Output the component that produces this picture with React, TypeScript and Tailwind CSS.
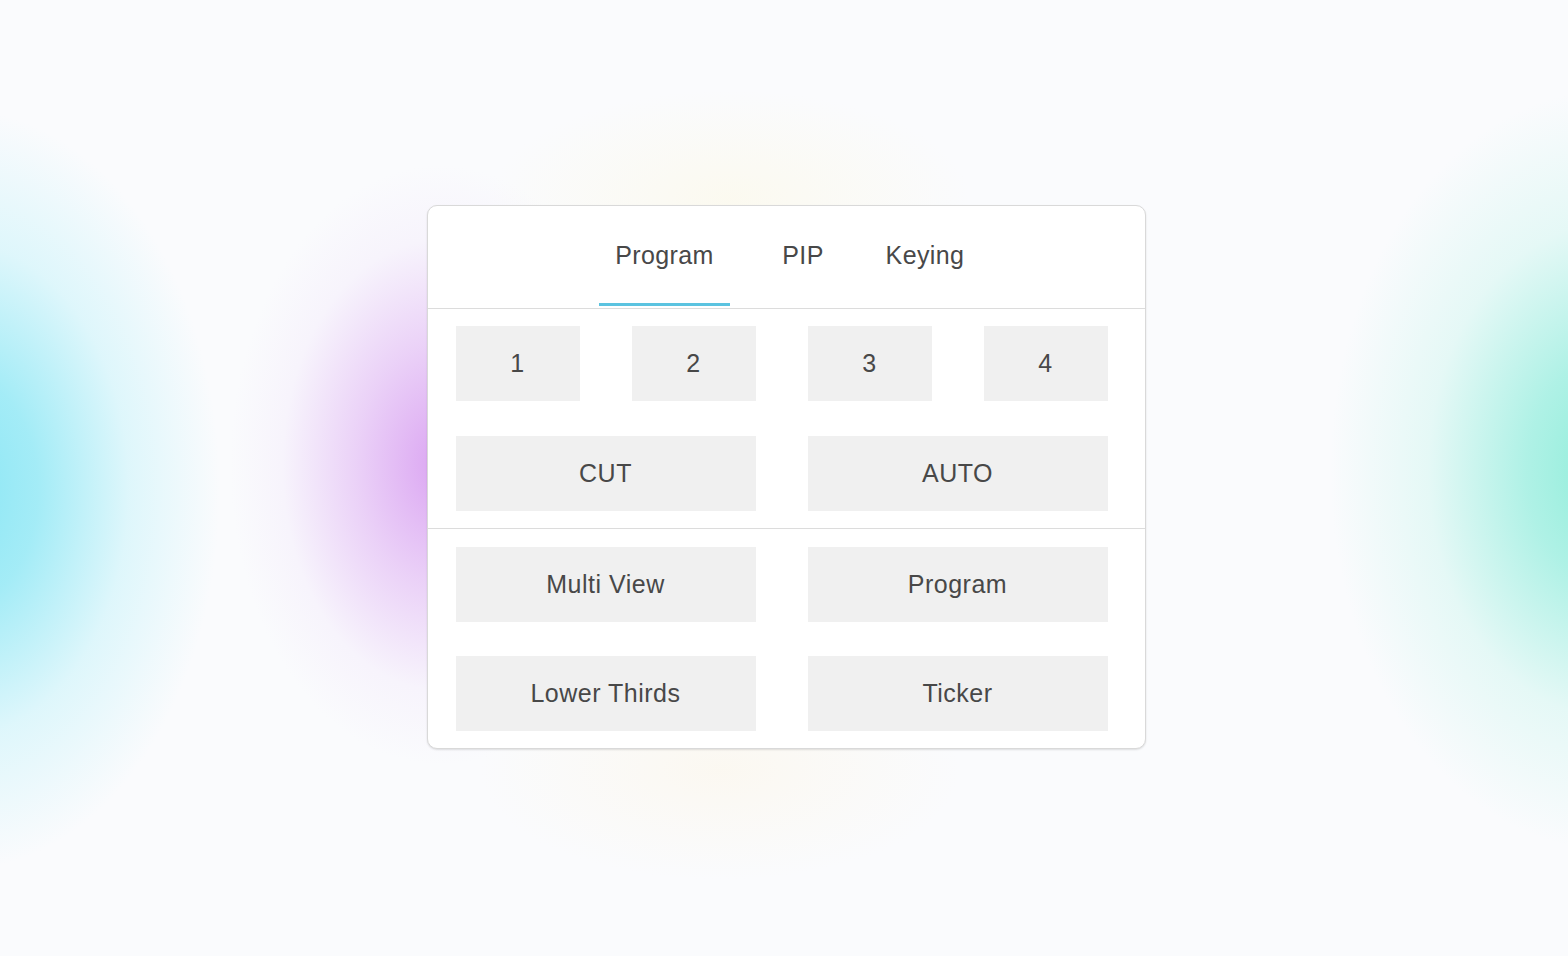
import React, { useState } from 'react';

const tabs = [
  { name: 'Program', cls: 'w-[131px]' },
  { name: 'PIP', cls: 'w-[70px] ml-[38px]' },
  { name: 'Keying', cls: 'w-[108px] ml-[33px]' },
];

const Btn: React.FC<{ label: string }> = ({ label }) => (
  <button className="h-[75px] bg-[#f0f0f0] text-[25px] tracking-[0.5px] text-[#484848] flex items-center justify-center">
    {label}
  </button>
);

const App: React.FC = () => {
  const [active, setActive] = useState('Program');

  return (
    <div
      className="w-full h-[956px] flex items-center justify-center pl-[4px] pb-[2px] bg-[#fafbfd] bg-[radial-gradient(ellipse_260px_380px_at_-40px_490px,#8ae6f5_0%,rgba(142,232,245,0.8)_30%,rgba(170,238,248,0.35)_65%,rgba(250,251,253,0)_100%),radial-gradient(ellipse_210px_300px_at_440px_465px,#dba5f2_0%,rgba(222,175,243,0.55)_40%,rgba(235,215,248,0.2)_75%,rgba(250,251,253,0)_100%),radial-gradient(ellipse_280px_380px_at_1610px_470px,#8eedd9_0%,rgba(150,238,222,0.75)_30%,rgba(180,242,230,0.3)_65%,rgba(250,251,253,0)_100%),radial-gradient(ellipse_240px_110px_at_730px_200px,rgba(252,249,234,0.7)_0%,rgba(250,251,253,0)_100%),radial-gradient(ellipse_240px_110px_at_720px_770px,rgba(252,247,236,0.7)_0%,rgba(250,251,253,0)_100%)]"
      style={{ fontFamily: '"Liberation Sans", Arial, sans-serif' }}
    >
      <div className="w-[719px] bg-white border border-[#d9d9d9] rounded-[10px] shadow-[0_1px_2px_rgba(0,0,0,0.12)] overflow-hidden">
        {/* tabs */}
        <div className="h-[103px] border-b border-[#dcdcdc] flex justify-center items-start pl-[6px]">
          {tabs.map((t) => (
            <button
              key={t.name}
              onClick={() => setActive(t.name)}
              className={`${t.cls} h-[100px] pt-[2px] flex items-center justify-center text-[25px] tracking-[0.4px] text-[#484848] border-b-[3px] ${
                active === t.name ? 'border-[#5bc3e0]' : 'border-transparent'
              }`}
            >
              {t.name}
            </button>
          ))}
        </div>

        <div className="pl-[28px] pr-[37px] pt-[17px] pb-[17px] border-b border-[#dcdcdc] flex flex-col gap-[35px]">
          <div className="grid grid-cols-4 gap-x-[52px]">
            {['1', '2', '3', '4'].map((n) => (
              <Btn key={n} label={n} />
            ))}
          </div>
          <div className="grid grid-cols-2 gap-x-[52px]">
            <Btn label="CUT" />
            <Btn label="AUTO" />
          </div>
        </div>

        <div className="pl-[28px] pr-[37px] pt-[18px] pb-[17px] flex flex-col gap-[34px]">
          <div className="grid grid-cols-2 gap-x-[52px]">
            <Btn label="Multi View" />
            <Btn label="Program" />
          </div>
          <div className="grid grid-cols-2 gap-x-[52px]">
            <Btn label="Lower Thirds" />
            <Btn label="Ticker" />
          </div>
        </div>
      </div>
    </div>
  );
};

export default App;
